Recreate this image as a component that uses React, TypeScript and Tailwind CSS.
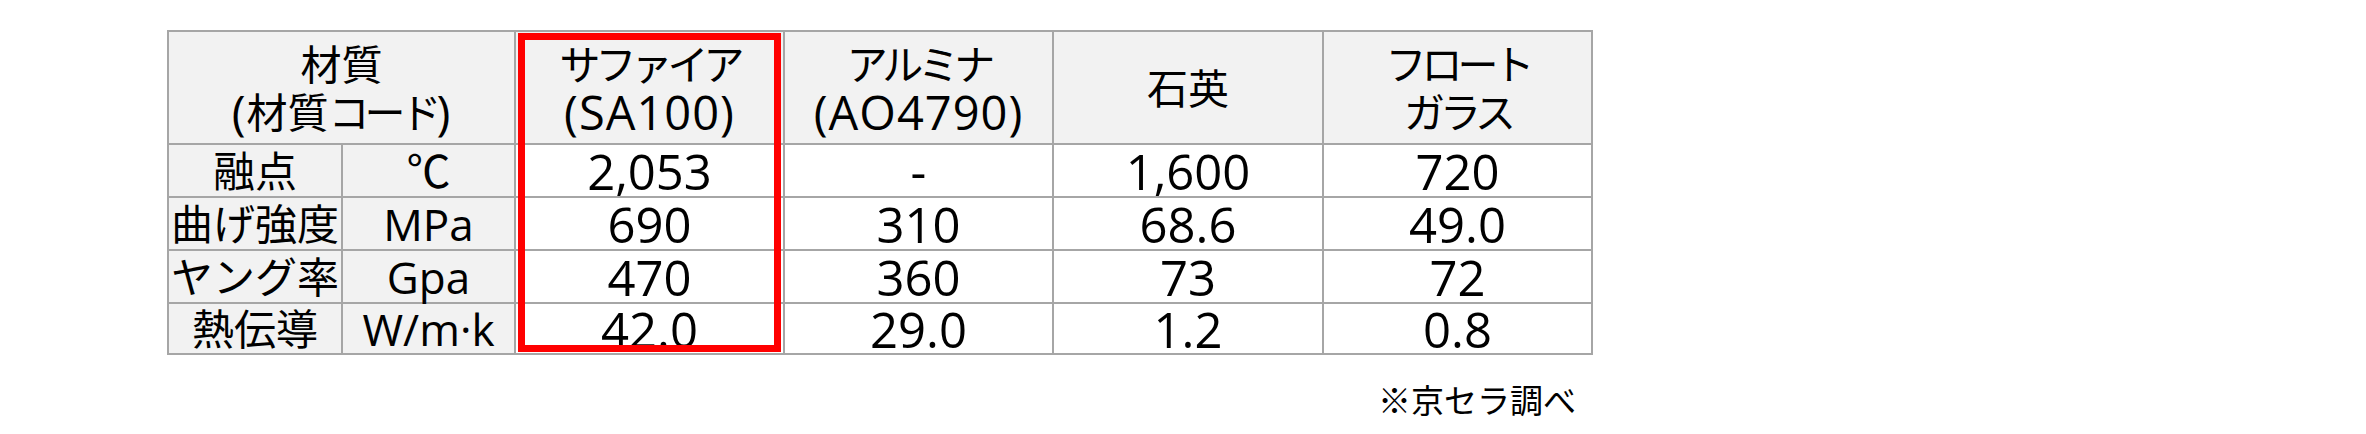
import React from "react";

const FONT = "font-['Open_Sans','Noto_Sans_CJK_JP',sans-serif]";

interface PropRow {
  label: string;
  unit: string;
  values: string[];
}

const rows: PropRow[] = [
  { label: "融点", unit: "℃", values: ["2,053", "-", "1,600", "720"] },
  { label: "曲げ強度", unit: "MPa", values: ["690", "310", "68.6", "49.0"] },
  { label: "ヤング率", unit: "Gpa", values: ["470", "360", "73", "72"] },
  { label: "熱伝導", unit: "W/m·k", values: ["42.0", "29.0", "1.2", "0.8"] },
];

// header text: kana lines get tightened a bit, latin parts are set larger
type Seg = { t: string; kind: "kanji" | "kana" | "latin" };
const segCls: Record<Seg["kind"], string> = {
  kanji: "text-[41px]",
  kana: "text-[41px] tracking-[-5px]",
  latin: "text-[47px] tracking-[1px]",
};

const headers: Seg[][][] = [
  [
    [{ t: "サファイア", kind: "kana" }],
    [{ t: "(SA100)", kind: "latin" }],
  ],
  [
    [{ t: "アルミナ", kind: "kana" }],
    [{ t: "(AO4790)", kind: "latin" }],
  ],
  [[{ t: "石英", kind: "kanji" }]],
  [
    [{ t: "フロート", kind: "kana" }],
    [{ t: "ガラス", kind: "kana" }],
  ],
];

const materialHead: Seg[][] = [
  [{ t: "材質", kind: "kanji" }],
  [
    { t: "(", kind: "latin" },
    { t: "材質", kind: "kanji" },
    { t: "コード", kind: "kana" },
    { t: ")", kind: "latin" },
  ],
];

const HeadCell = ({ lines, span }: { lines: Seg[][]; span?: boolean }) => (
  <div
    className={`flex flex-col items-center justify-center bg-[#f2f2f2] pt-[2px] text-black ${
      span ? "col-span-2" : ""
    }`}
  >
    {lines.map((line, i) => (
      <div key={i} className="flex h-[48px] items-center whitespace-nowrap leading-none">
        {line.map((s, j) => (
          <span key={j} className={segCls[s.kind]}>
            {s.t}
          </span>
        ))}
      </div>
    ))}
  </div>
);

export default function App() {
  return (
    <div className={`min-h-[434px] w-[2366px] bg-white pl-[167px] pt-[30px] ${FONT}`}>
      <div className="relative w-[1426px]">
        <div className="grid grid-cols-[172px_171px_267px_267px_268px_267px] grid-rows-[111px_51px_51px_51px_49px] gap-[2px] bg-[#a6a6a6] p-[2px]">
          <HeadCell lines={materialHead} span />
          {headers.map((h, i) => (
            <HeadCell key={i} lines={h} />
          ))}

          {rows.map((r) => (
            <React.Fragment key={r.label}>
              <div className="flex items-center justify-center bg-[#f2f2f2] text-[42px] leading-none whitespace-nowrap">
                {r.label}
              </div>
              <div className="flex items-center justify-center bg-[#f2f2f2] text-[44px] leading-none whitespace-nowrap">
                {r.unit}
              </div>
              {r.values.map((v, i) => (
                <div
                  key={i}
                  className="flex items-center justify-center bg-white pt-[2px] text-[49px] leading-none"
                >
                  {v}
                </div>
              ))}
            </React.Fragment>
          ))}
        </div>

        {/* highlight around the sapphire column */}
        <div className="pointer-events-none absolute left-[351px] top-[3px] h-[319px] w-[263px] border-[7px] border-[#ff0000]" />

        <div className="mt-[26px] pr-[17px] text-right text-[33px] leading-[40px] text-black">
          ※京セラ調べ
        </div>
      </div>
    </div>
  );
}
